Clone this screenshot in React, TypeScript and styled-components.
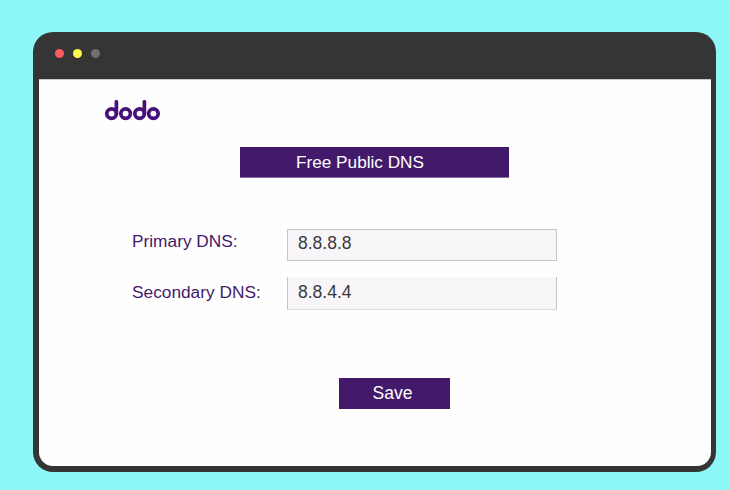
import React from 'react';
import styled, { createGlobalStyle } from 'styled-components';

const GlobalStyle = createGlobalStyle`
  html, body {
    margin: 0;
    padding: 0;
    background: #8ef7f7;
    font-family: "Liberation Sans", Arial, sans-serif;
  }
`;

const Page = styled.div`
  width: 730px;
  height: 490px;
  padding: 32px 14px 18px 33px;
  box-sizing: border-box;
  overflow: hidden;
`;

const BrowserWindow = styled.div`
  width: 683px;
  height: 440px;
  box-sizing: border-box;
  display: flex;
  flex-direction: column;
  background: #353535;
  border-radius: 20px;
  padding: 0 5px 6px 6px;
`;

const TitleBar = styled.div`
  height: 47px;
  flex: none;
  display: flex;
  align-items: center;
  gap: 9px;
  padding: 0 0 4px 16px;
  box-sizing: border-box;
`;

const Dot = styled.span<{ $color: string }>`
  width: 9px;
  height: 9px;
  border-radius: 50%;
  background: ${p => p.$color};
`;

const Content = styled.div`
  flex: 1;
  background: #fffefe;
  border-top: 1px solid #c9c9c9;
  border-radius: 0 0 14px 14px;
  padding: 20px 0 0 66px;
  box-sizing: border-box;
`;

const Logo = styled.svg`
  display: block;
  width: 56px;
  height: 21px;
`;

const Banner = styled.div`
  width: 269px;
  height: 31px;
  box-sizing: border-box;
  margin: 26px 0 0 135px;
  padding-left: 56px;
  background: #431a6b;
  border-bottom: 1px solid #8b6fa8;
  color: #fff;
  font-size: 17.2px;
  line-height: 30px;
`;

const Form = styled.div`
  margin: 51px 0 0 27px;
  display: flex;
  flex-direction: column;
  gap: 16px;
`;

const Row = styled.div`
  display: flex;
`;

const Label = styled.label<{ $lift: number }>`
  width: 155px;
  color: #431a6b;
  font-size: 17.3px;
  line-height: 32px;
  margin-top: ${p => p.$lift}px;
`;

const Field = styled.div<{ $faded?: boolean }>`
  width: 270px;
  height: ${p => (p.$faded ? 33 : 32)}px;
  box-sizing: border-box;
  padding-left: 10px;
  background: #f8f6f9;
  color: #3a3a3a;
  font-size: 17.5px;
  line-height: 27px;
  border: 1px solid #c6c6c6;
  ${p => p.$faded && `
    border-top: 0;
    border-bottom: 1px dotted #c6c6c6;
    line-height: 30px;
  `}
`;

const SaveButton = styled.button`
  display: block;
  width: 111px;
  height: 31px;
  margin: 68px 0 0 234px;
  padding: 0 4px 0 0;
  border: 0;
  background: #431a6b;
  color: #fff;
  font-family: inherit;
  font-size: 17.5px;
`;

const DodoLogo = () => (
  <Logo viewBox="0 0 56 21" fill="none" stroke="#47107a" strokeWidth="3.7">
    <circle cx="6.6" cy="13.6" r="4.8" />
    <path d="M11.4 13.6V1.8" strokeLinecap="round" />
    <circle cx="20.6" cy="13.6" r="4.8" />
    <circle cx="34.6" cy="13.6" r="4.8" />
    <path d="M39.4 13.6V1.8" strokeLinecap="round" />
    <circle cx="48.4" cy="13.6" r="4.8" />
  </Logo>
);

const App = () => {
  return (
    <>
      <GlobalStyle />
      <Page>
        <BrowserWindow>
          <TitleBar>
            <Dot $color="#fd5a5f" />
            <Dot $color="#fdf94f" />
            <Dot $color="#6f6f6f" />
          </TitleBar>
          <Content>
            <DodoLogo />
            <Banner>Free Public DNS</Banner>
            <Form>
              <Row>
                <Label $lift={-4}>Primary DNS:</Label>
                <Field>8.8.8.8</Field>
              </Row>
              <Row>
                <Label $lift={-1}>Secondary DNS:</Label>
                <Field $faded>8.8.4.4</Field>
              </Row>
            </Form>
            <SaveButton>Save</SaveButton>
          </Content>
        </BrowserWindow>
      </Page>
    </>
  );
};

export default App;
